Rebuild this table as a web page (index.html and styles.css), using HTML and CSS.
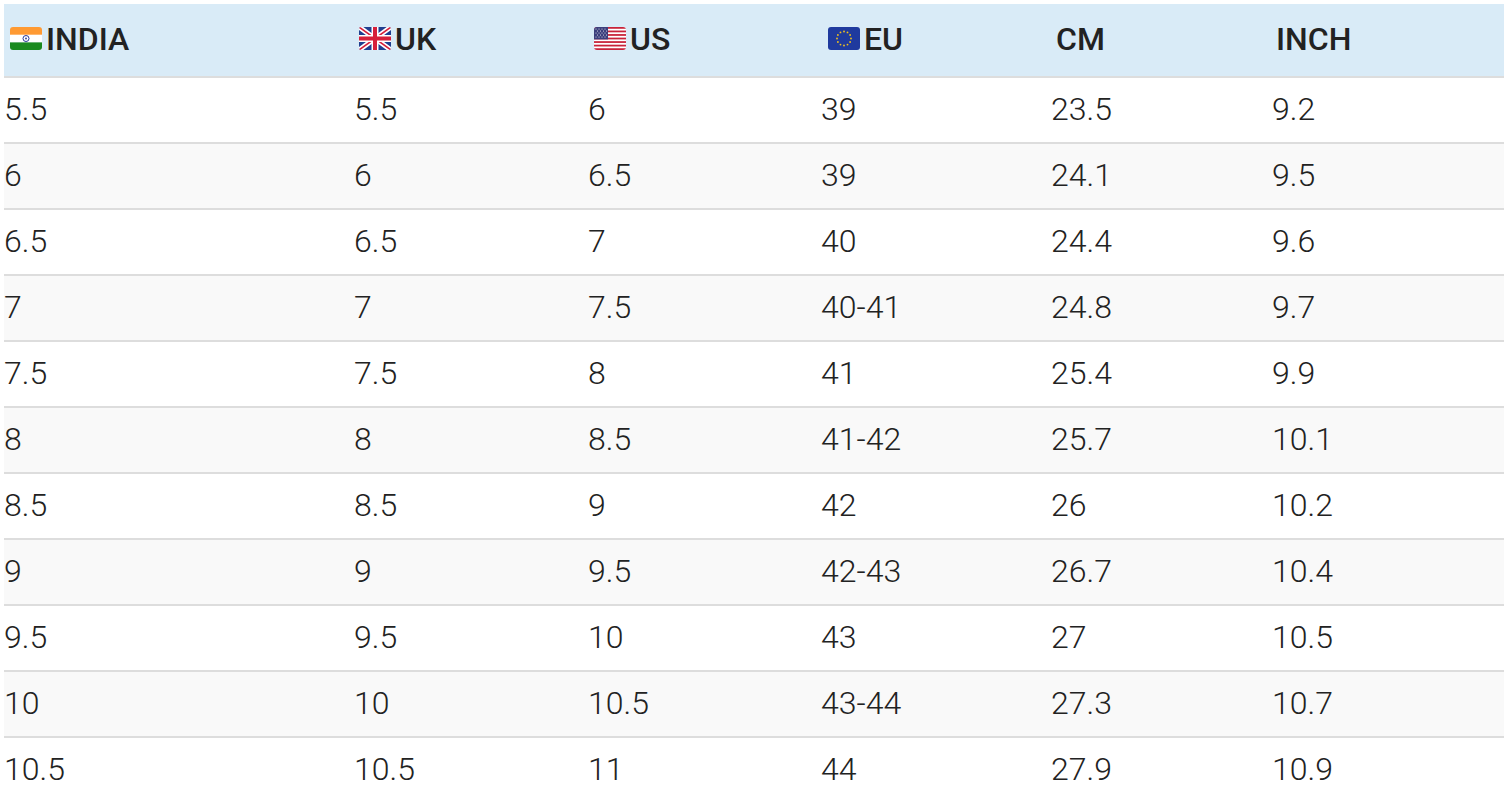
FILE: index.html
```html
<!DOCTYPE html>
<html>
<head>
<meta charset="utf-8">
<link rel="stylesheet" href="styles.css">
</head>
<body>
<table class="size-table">
  <colgroup>
    <col class="c1"><col class="c2"><col class="c3"><col class="c4"><col class="c5"><col class="c6">
  </colgroup>
  <thead>
    <tr>
      <th class="p6"><div class="hd"><svg class="flag" viewBox="0 0 32 23"><defs><clipPath id="r1"><rect width="32" height="23" rx="3"/></clipPath></defs><g clip-path="url(#r1)"><rect width="32" height="8" fill="#ff9a33"/><rect y="7.7" width="32" height="7.7" fill="#ffffff"/><rect y="15.4" width="32" height="7.6" fill="#1a8a1f"/><circle cx="16" cy="11.5" r="3" fill="none" stroke="#2a3a99" stroke-width="1"/><circle cx="16" cy="11.5" r="0.9" fill="#2a3a99"/></g></svg>INDIA</div></th>
      <th class="p5"><div class="hd"><svg class="flag" viewBox="0 0 32 23"><defs><clipPath id="r2"><rect width="32" height="23" rx="2"/></clipPath></defs><g clip-path="url(#r2)"><rect width="32" height="23" fill="#1f3f8f"/><path d="M0 0L32 23M32 0L0 23" stroke="#ffffff" stroke-width="5"/><path d="M0 0L32 23M32 0L0 23" stroke="#d6203a" stroke-width="1.6"/><path d="M16 0V23M0 11.5H32" stroke="#ffffff" stroke-width="7"/><path d="M16 0V23M0 11.5H32" stroke="#d6203a" stroke-width="4"/></g></svg>UK</div></th>
      <th class="p6"><div class="hd"><svg class="flag" viewBox="0 0 32 23"><defs><clipPath id="r3"><rect width="32" height="23" rx="3"/></clipPath></defs><g clip-path="url(#r3)"><rect width="32" height="23" fill="#ffffff"/><g fill="#c8233a"><rect y="0" width="32" height="1.77"/><rect y="3.54" width="32" height="1.77"/><rect y="7.08" width="32" height="1.77"/><rect y="10.62" width="32" height="1.77"/><rect y="14.16" width="32" height="1.77"/><rect y="17.7" width="32" height="1.77"/><rect y="21.24" width="32" height="1.77"/></g><rect width="14" height="12.4" fill="#3c3f7d"/><g fill="#ffffff"><circle cx="2" cy="2" r=".5"/><circle cx="5" cy="2" r=".5"/><circle cx="8" cy="2" r=".5"/><circle cx="11" cy="2" r=".5"/><circle cx="3.5" cy="4" r=".5"/><circle cx="6.5" cy="4" r=".5"/><circle cx="9.5" cy="4" r=".5"/><circle cx="12.5" cy="4" r=".5"/><circle cx="2" cy="6" r=".5"/><circle cx="5" cy="6" r=".5"/><circle cx="8" cy="6" r=".5"/><circle cx="11" cy="6" r=".5"/><circle cx="3.5" cy="8" r=".5"/><circle cx="6.5" cy="8" r=".5"/><circle cx="9.5" cy="8" r=".5"/><circle cx="12.5" cy="8" r=".5"/><circle cx="2" cy="10" r=".5"/><circle cx="5" cy="10" r=".5"/><circle cx="8" cy="10" r=".5"/><circle cx="11" cy="10" r=".5"/></g></g></svg>US</div></th>
      <th class="p7"><div class="hd"><svg class="flag" viewBox="0 0 32 23"><rect width="32" height="23" rx="3" fill="#1f3a9e"/><g fill="#f2c21b"><circle cx="16" cy="4.5" r=".9"/><circle cx="19.5" cy="5.4" r=".9"/><circle cx="22.1" cy="8" r=".9"/><circle cx="23" cy="11.5" r=".9"/><circle cx="22.1" cy="15" r=".9"/><circle cx="19.5" cy="17.6" r=".9"/><circle cx="16" cy="18.5" r=".9"/><circle cx="12.5" cy="17.6" r=".9"/><circle cx="9.9" cy="15" r=".9"/><circle cx="9" cy="11.5" r=".9"/><circle cx="9.9" cy="8" r=".9"/><circle cx="12.5" cy="5.4" r=".9"/></g></svg>EU</div></th>
      <th class="p5"><div class="hd">CM</div></th>
      <th class="p4"><div class="hd">INCH</div></th>
    </tr>
  </thead>
  <tbody>
    <tr><td>5.5</td><td>5.5</td><td>6</td><td>39</td><td>23.5</td><td>9.2</td></tr>
    <tr><td>6</td><td>6</td><td>6.5</td><td>39</td><td>24.1</td><td>9.5</td></tr>
    <tr><td>6.5</td><td>6.5</td><td>7</td><td>40</td><td>24.4</td><td>9.6</td></tr>
    <tr><td>7</td><td>7</td><td>7.5</td><td>40-41</td><td>24.8</td><td>9.7</td></tr>
    <tr><td>7.5</td><td>7.5</td><td>8</td><td>41</td><td>25.4</td><td>9.9</td></tr>
    <tr><td>8</td><td>8</td><td>8.5</td><td>41-42</td><td>25.7</td><td>10.1</td></tr>
    <tr><td>8.5</td><td>8.5</td><td>9</td><td>42</td><td>26</td><td>10.2</td></tr>
    <tr><td>9</td><td>9</td><td>9.5</td><td>42-43</td><td>26.7</td><td>10.4</td></tr>
    <tr><td>9.5</td><td>9.5</td><td>10</td><td>43</td><td>27</td><td>10.5</td></tr>
    <tr><td>10</td><td>10</td><td>10.5</td><td>43-44</td><td>27.3</td><td>10.7</td></tr>
    <tr><td>10.5</td><td>10.5</td><td>11</td><td>44</td><td>27.9</td><td>10.9</td></tr>
  </tbody>
</table>
</body>
</html>
```

FILE: styles.css
```css
html, body {
  margin: 0;
  padding: 0;
  background: #ffffff;
}
body {
  padding: 4px 0 0 4px;
  font-family: Roboto, "Liberation Sans", sans-serif;
  color: #222222;
  overflow: hidden;
}
.size-table {
  width: 1500px;
  table-layout: fixed;
  border-collapse: separate;
  border-spacing: 0;
}
.c1 { width: 350px; }
.c2 { width: 234px; }
.c3 { width: 233px; }
.c4 { width: 230px; }
.c5 { width: 221px; }
.c6 { width: 232px; }
.size-table th {
  background: #d9ebf7;
  padding: 0;
  text-align: left;
  font-size: 32px;
  font-weight: 500;
  line-height: normal;
  border-bottom: 2px solid #dddddd;
  white-space: nowrap;
  vertical-align: top;
}
.size-table th.p4 { padding-left: 4px; }
.size-table th.p5 { padding-left: 5px; }
.size-table th.p6 { padding-left: 6px; }
.size-table th.p7 { padding-left: 7px; }
.hd {
  display: flex;
  align-items: center;
  gap: 4px;
  height: 72px;
  padding-bottom: 2px;
  box-sizing: border-box;
}
.flag {
  width: 32px;
  height: 23px;
  display: block;
  flex: none;
  margin-bottom: 2px;
}
.size-table td {
  padding: 0 0 2px 0;
  font-size: 32px;
  font-weight: 300;
  line-height: 62px;
  border-bottom: 2px solid #dddddd;
  white-space: nowrap;
  vertical-align: top;
}
.size-table tbody tr:nth-child(even) td {
  background: #f9f9f9;
}
```
